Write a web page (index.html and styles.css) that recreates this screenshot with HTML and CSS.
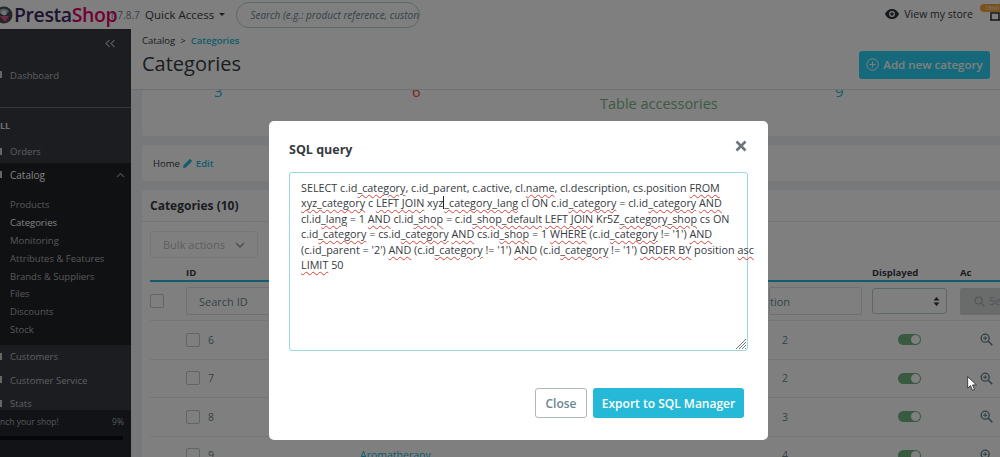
FILE: index.html
```html
<!DOCTYPE html>
<html lang="en">
<head>
<meta charset="utf-8">
<title>Categories</title>
<link rel="stylesheet" href="styles.css">
</head>
<body>
<div class="app">
  <header class="topbar">
    <div class="logo">
      <svg class="puffin" width="14" height="22" viewBox="0 0 14 22"><circle cx="4" cy="11" r="8.5" fill="#4a4a52"/><path d="M-2 9a6 5 0 0 1 11-2l-3 4z" fill="#9fb8c0"/><circle cx="4" cy="9" r="2.4" fill="#e8e8e8"/><path d="M0 12l9 0-4 6z" fill="#d65a80"/></svg>
      <span class="logo-a">Presta</span><span class="logo-b">Shop</span>
    </div>
    <span class="version">1.7.8.7</span>
    <span class="quick">Quick Access<i class="caret"></i></span>
    <div class="search">
      <svg width="13" height="13" viewBox="0 0 13 13"><circle cx="5.2" cy="5.2" r="3.9" fill="none" stroke="#222" stroke-width="1.7"/><path d="M8 8l4 4" stroke="#222" stroke-width="2"/></svg>
      <span class="search-text">Search (e.g.: product reference, custon</span>
    </div>
    <div class="store">
      <svg width="14" height="10" viewBox="0 0 14 10"><path d="M7 0C3.8 0 1.200 2 0 5c1.200 3 3.800 5 7 5s5.800-2 7-5c-1.200-3-3.800-5-7-5z" fill="#2a3238"/><circle cx="7" cy="5" r="2.900" fill="#fff"/><circle cx="7" cy="5" r="1.700" fill="#2a3238"/></svg>
      <span>View my store</span>
    </div>
    <span class="badge">1860</span>
    <svg class="bell" width="10" height="9" viewBox="0 0 10 9"><path d="M1 8V1h8v7M0 8h10" fill="none" stroke="#333" stroke-width="1.500"/></svg>
  </header>
  <div class="columns">
    <nav class="sidebar">
      <div class="collapse">
        <svg width="12" height="9" viewBox="0 0 12 9"><path d="M5.500 1L2 4.500 5.500 8M10.500 1L7 4.500 10.500 8" fill="none" stroke="#a8abaf" stroke-width="1.200"/></svg>
      </div>
      <div class="nav-item nav-dash"><i class="stub"></i>Dashboard</div>
      <div class="nav-section">LL</div>
      <div class="nav-item nav-orders"><i class="stub"></i>Orders</div>
      <div class="nav-open">
        <div class="nav-open-title"><i class="stub"></i><span>Catalog</span>
          <svg width="9" height="6" viewBox="0 0 9 6"><path d="M1 5l3.500-3.500L8 5" fill="none" stroke="#8d9094" stroke-width="1.200"/></svg>
        </div>
        <a class="sub">Products</a>
        <a class="sub sub-on">Categories</a>
        <a class="sub">Monitoring</a>
        <a class="sub">Attributes &amp; Features</a>
        <a class="sub">Brands &amp; Suppliers</a>
        <a class="sub">Files</a>
        <a class="sub">Discounts</a>
        <a class="sub">Stock</a>
      </div>
      <div class="nav-item"><i class="stub"></i>Customers</div>
      <div class="nav-item"><i class="stub"></i>Customer Service</div>
      <div class="nav-item"><i class="stub"></i>Stats</div>
      <div class="launch">
        <div class="launch-row"><span class="launch-text">nch your shop!</span><span>9%</span></div>
        <div class="launch-bar"></div>
      </div>
    </nav>
    <main class="main">
      <div class="page-head">
        <div class="crumbs"><span>Catalog</span><span class="sep">&gt;</span><b>Categories</b></div>
        <div class="title-row">
          <h1>Categories</h1>
          <a class="add-btn">
            <svg width="13" height="13" viewBox="0 0 13 13"><circle cx="6.500" cy="6.500" r="5.700" fill="none" stroke="#fff" stroke-width="1"/><path d="M6.500 3.500v6M3.500 6.500h6" stroke="#fff" stroke-width="1"/></svg>
            Add new category
          </a>
        </div>
      </div>
      <div class="content">
        <section class="card kpi">
          <span class="kpi-n blue k1">3</span>
          <span class="kpi-n red k2">6</span>
          <span class="kpi-big">Table accessories</span>
          <span class="kpi-n navy k3">9</span>
        </section>
        <section class="card crumbcard">
          <span>Home</span>
          <svg width="10" height="10" viewBox="0 0 10 10"><path d="M0 10l.6-2.800L7 .8 9.200 3 2.800 9.400z" fill="#25b9d7"/></svg>
          <a>Edit</a>
        </section>
        <section class="card list">
          <h2>Categories (10)</h2>
          <div class="bulk-row"><div class="bulk">Bulk actions
            <svg width="10" height="6" viewBox="0 0 10 6"><path d="M1 1l4 4 4-4" fill="none" stroke="#9a9ea2" stroke-width="1.500"/></svg></div></div>
          <div class="grid ghead"><span></span><span>ID</span><span></span><span></span><span>Displayed</span><span class="act">Ac</span></div>
          <div class="grid gfilter">
            <i class="check"></i>
            <div class="inp">Search ID</div>
            <span></span>
            <div class="inp inp-pos">tion</div>
            <div class="sel"><svg width="7" height="9" viewBox="0 0 7 9"><path d="M3.500 0L6.500 3.500h-6zM3.500 9L.5 5.500h6z" fill="#333"/></svg></div>
            <div class="sbtn"><svg width="11" height="11" viewBox="0 0 11 11"><circle cx="4.500" cy="4.500" r="3.500" fill="none" stroke="#aaa" stroke-width="1.200"/><path d="M7 7l3.500 3.500" stroke="#aaa" stroke-width="1.200"/></svg><span>Se</span></div>
          </div>
          <div class="grid row"><span></span><div class="idc"><i class="check"></i>6</div><span></span><span class="pos">2</span><div class="tg"></div><svg class="zoomi" width="13" height="13" viewBox="0 0 13 13"><circle cx="5.200" cy="5.200" r="4" fill="none" stroke="#5c7f8a" stroke-width="1.300"/><path d="M8 8l4.300 4.300" stroke="#5c7f8a" stroke-width="1.500"/><path d="M5.200 3.200v4M3.200 5.200h4" stroke="#5c7f8a"/></svg></div>
          <div class="grid row"><span></span><div class="idc"><i class="check"></i>7</div><span></span><span class="pos">2</span><div class="tg"></div><svg class="zoomi" width="13" height="13" viewBox="0 0 13 13"><circle cx="5.200" cy="5.200" r="4" fill="none" stroke="#5c7f8a" stroke-width="1.300"/><path d="M8 8l4.300 4.300" stroke="#5c7f8a" stroke-width="1.500"/><path d="M5.200 3.200v4M3.200 5.200h4" stroke="#5c7f8a"/></svg></div>
          <div class="grid row"><span></span><div class="idc"><i class="check"></i>8</div><span></span><span class="pos">3</span><div class="tg"></div><svg class="zoomi" width="13" height="13" viewBox="0 0 13 13"><circle cx="5.200" cy="5.200" r="4" fill="none" stroke="#5c7f8a" stroke-width="1.300"/><path d="M8 8l4.300 4.300" stroke="#5c7f8a" stroke-width="1.500"/><path d="M5.200 3.200v4M3.200 5.200h4" stroke="#5c7f8a"/></svg></div>
          <div class="grid row"><span></span><div class="idc"><i class="check"></i>9</div><a class="name">Aromatherapy</a><span class="pos">4</span><div class="tg"></div><svg class="zoomi" width="13" height="13" viewBox="0 0 13 13"><circle cx="5.200" cy="5.200" r="4" fill="none" stroke="#5c7f8a" stroke-width="1.300"/><path d="M8 8l4.300 4.300" stroke="#5c7f8a" stroke-width="1.500"/><path d="M5.200 3.200v4M3.200 5.200h4" stroke="#5c7f8a"/></svg></div>
        </section>
      </div>
    </main>
  </div>
</div>
<div class="overlay"></div>
<div class="modal">
  <div class="modal-head">
    <h3>SQL query</h3>
    <svg width="12" height="12" viewBox="0 0 12 12"><path d="M1.500 1.500l9 9M10.500 1.500l-9 9" stroke="#6c757d" stroke-width="2.600"/></svg>
  </div>
  <div class="sql">SELECT c.id<u>_category</u>, c.id_parent, c.active, cl.<u>name</u>, cl.description, cs.position <u>FROM</u><br><u>xyz_category</u> c <u>LEFT JOIN</u> xyz<i class="caretbar"></i><u>_category_lang</u> cl ON c.id<u>_category</u> = cl.id<u>_category</u> <u>AND</u><br>cl.id<u>_lang</u> = 1 <u>AND</u> cl.id<u>_shop</u> = c.id<u>_shop_default</u> <u>LEFT JOIN</u> Kr5Z<u>_category_shop</u> cs ON<br>c.id<u>_category</u> = cs.id<u>_category</u> <u>AND</u> cs.id<u>_shop</u> = 1 <u>WHERE</u> (c.id<u>_category</u> != '1') <u>AND</u><br>(c.id_parent = '2') <u>AND</u> (c.id<u>_category</u> != '1') <u>AND</u> (c.id<u>_category</u> != '1') <u>ORDER BY</u> position <u>asc</u><br><u>LIMIT</u> 50
    <svg class="grip" width="12" height="12" viewBox="0 0 12 12"><path d="M11 1L1 11M11 4L4 11M11 7L7 11M11 10L10 11" stroke="#777" stroke-width="1"/></svg>
  </div>
  <div class="modal-foot">
    <a class="btn-close">Close</a>
    <a class="btn-export">Export to SQL Manager</a>
  </div>
</div>
<svg class="pointer" width="10" height="15" viewBox="0 0 10 15"><path d="M.7.7v11.500l2.800-2.600 2 4.700 2-.9-2-4.500h3.900z" fill="#fff" stroke="#222" stroke-width=".8"/></svg>
</body>
</html>
```
FILE: styles.css
```css
* { box-sizing: border-box; }
html, body { margin: 0; height: 457px; overflow: hidden; }
body { font-family: "Open Sans", "Liberation Sans", sans-serif; background: #eff1f2; color: #363a41; position: relative; width: 1000px; }
a { text-decoration: none; }
i { font-style: normal; }
h1, h2, h3 { margin: 0; font-weight: 400; }

.app { width: 1000px; height: 457px; display: flex; flex-direction: column; overflow: hidden; }
.topbar { height: 29px; flex: none; background: #fff; display: flex; align-items: center; position: relative; }
.logo { display: flex; align-items: center; width: 109px; font-family: "Open Sans", sans-serif; font-size: 19.5px; font-weight: 600; letter-spacing: -.4px; }
.puffin { margin-right: 0; flex: none; }
.logo-a { color: #3a2a5e; }
.logo-b { color: #df0067; }
.version { font-size: 10px; color: #6c868e; width: 36px; }
.quick { font-size: 11.500px; color: #363a41; width: 91px; display: flex; align-items: center; }
.caret { width: 0; height: 0; border: 3.500px solid transparent; border-top-color: #363a41; border-bottom: 0; margin-left: 5px; }
.search { width: 184px; height: 26px; border: 1px solid #bbcdd2; border-radius: 13px; display: flex; align-items: center; padding-left: 7px; gap: 6px; overflow: hidden; }
.search-text { font-size: 10px; font-style: italic; color: #6c868e; white-space: nowrap; }
.store { margin-left: auto; display: flex; align-items: center; gap: 5px; font-size: 10.500px; color: #363a41; margin-right: 27px; position: relative; top: -1px; }
.badge { position: absolute; left: 980px; top: 4px; width: 24px; height: 8px; border-radius: 4px; background: #f7a33b; color: #fff; font-size: 6px; line-height: 8px; text-align: center; overflow: hidden; }
.bell { position: absolute; left: 990px; top: 12px; }

.columns { flex: 1; display: flex; min-height: 0; }
.sidebar { width: 131px; flex: none; background: #363a41; color: #bebfc0; font-size: 9.500px; display: flex; flex-direction: column; position: relative; overflow: hidden; }
.collapse { height: 29px; display: flex; justify-content: flex-end; align-items: center; padding-right: 15px; }
.nav-item { height: 23.500px; display: flex; align-items: center; padding-left: 10px; position: relative; }
.stub { position: absolute; left: 0; top: 50%; width: 2px; height: 7px; margin-top: -4px; background: #ccc; }
.nav-dash { height: 24px; margin-bottom: 20px; margin-top: 5px; }
.nav-dash::after { content: none; }
.nav-section { border-top: 1px solid #6a6e74; height: 33px; padding-top: 11px; font-size: 9px; font-weight: 700; color: #ddd; }
.nav-orders { height: 23px; }
.nav-open { background: #202226; height: 182px; display: flex; flex-direction: column; }
.nav-open-title { height: 23px; position: relative; display: flex; align-items: center; justify-content: space-between; padding: 0 6px 0 10px; color: #fff; font-size: 10px; margin-bottom: 10px; }
.sub { height: 17.800px; display: flex; align-items: center; padding-left: 10px; color: #aeafb1; font-size: 9.500px; }
.sub-on { color: #fff; }
.nav-open + .nav-item { margin-top: 0; }
.launch { position: absolute; left: 0; right: 0; bottom: 0; top: 381px; background: #25272c; padding: 6px 7px 0 0; }
.launch-row { display: flex; justify-content: space-between; font-size: 8.500px; color: #a9aaac; }
.launch-bar { height: 4px; background: #0d0e10; margin-top: 9px; margin-right: 1px; }

.main { flex: 1; min-width: 0; display: flex; flex-direction: column; background: #eff1f2; overflow: hidden; }
.page-head { height: 61px; flex: none; background: #fff; border-bottom: 1px solid #dfe3e5; padding: 5px 10px 0 11px; }
.crumbs { font-size: 9.500px; display: flex; gap: 5px; height: 13px; align-items: center; }
.crumbs b { color: #25b9d7; font-weight: 600; }
.title-row { display: flex; justify-content: space-between; align-items: center; margin-top: 2px; height: 30px; }
h1 { font-size: 20px; color: #363a41; line-height: 30px; }
.add-btn { background: #2ad3f4; height: 28px; width: 131px; border-radius: 3px; display: flex; align-items: center; gap: 4px; justify-content: center; color: #fff; font-size: 11.500px; font-weight: 600; margin-top: 1px; }
.content { padding: 0 0 0 11px; display: flex; flex-direction: column; gap: 9px; }
.card { background: #fff; border-radius: 3px 0 0 3px; }
.kpi { height: 46px; position: relative; overflow: hidden; }
.kpi-n { position: absolute; font-size: 15px; line-height: 20px; top: -9px; }
.k1 { left: 72px; } .k2 { left: 270px; } .k3 { left: 693px; }
.blue { color: #25b9d7; } .red { color: #f54c3e; } .navy { color: #25b9d7; }
.kpi-big { position: absolute; left: 458px; top: 4px; font-size: 14.500px; color: #7bb58a; line-height: 20px; }
.crumbcard { height: 36px; display: flex; align-items: center; gap: 3px; padding-left: 11px; font-size: 9.500px; }
.crumbcard a { color: #25b9d7; font-weight: 600; }
.list { padding: 0; }
.list h2 { font-size: 12px; font-weight: 700; height: 32px; line-height: 32px; padding-left: 8px; border-bottom: 1px solid #e8eaeb; }
.bulk-row { padding: 9px 0 0 8px; height: 43px; }
.bulk { width: 108px; height: 27px; border: 1px solid #eceeef; border-radius: 3px; display: flex; align-items: center; justify-content: space-between; padding: 0 12px; font-size: 11px; color: #bbbdbf; }
.grid { display: grid; grid-template-columns: 36px 174px 409px 103px 88px 49px; margin-left: 8px; align-items: center; }
.ghead { height: 17px; font-size: 9.500px; font-weight: 700; border-bottom: 2px solid #25b9d7; box-sizing: content-box; }
.ghead { height: 15px; padding-top: 0; }
.gfilter { height: 39px; border-bottom: 1px solid #e8eaeb; align-items: center; }
.check { display: inline-block; width: 14px; height: 14px; border: 1px solid #bbcdd2; border-radius: 2px; background: #fff; flex: none; }
.inp { height: 28px; border: 1px solid #dde2e4; border-radius: 2px; font-size: 11px; color: #6c868e; display: flex; align-items: center; padding-left: 12px; width: 84px; }
.inp-pos { width: 93px; padding-left: 0; justify-content: flex-start; white-space: nowrap; }
.sel { width: 75px; height: 26px; border: 1px solid #bbcdd2; border-radius: 3px; display: flex; align-items: center; justify-content: flex-end; padding-right: 6px; }
.sbtn { height: 27px; background: #d4d6d7; border-radius: 2px; display: flex; align-items: center; gap: 4px; padding-left: 14px; font-size: 10.500px; color: #a8aaac; }
.row { height: 38.500px; border-bottom: 1px solid #e8eaeb; font-size: 10.500px; color: #6c868e; }
.idc { display: flex; align-items: center; gap: 8px; }
.name { color: #25b9d7; font-size: 10.500px; }
.pos { padding-left: 13px; }
.tg { width: 23px; height: 11px; border-radius: 6px; background: #70b580; margin-left: 26px; position: relative; }
.tg::after { content: ""; position: absolute; right: 1px; top: 1px; width: 9px; height: 9px; border-radius: 50%; background: #fff; }
.zoomi { margin-left: 20px; }

.overlay { position: absolute; inset: 0; background: rgba(0,0,0,.5); }
.modal { position: absolute; left: 269px; top: 121px; width: 499px; height: 319px; background: #fff; border-radius: 5px; padding: 0 20px; display: flex; flex-direction: column; }
.modal-head { height: 51px; flex: none; display: flex; align-items: center; justify-content: space-between; padding-right: 1px; }
.modal-head svg { margin-top: -1px; margin-right: 0; }
.modal-head h3 { font-size: 12.500px; font-weight: 700; color: #363a41; padding-top: 5px; }
.sql { width: 459px; height: 179px; border: 1px solid #9cd6e3; border-radius: 3px; padding: 7px 11px; font-size: 10.800px; line-height: 15.400px; color: #363a41; white-space: nowrap; position: relative; }
.sql u { text-decoration: underline wavy #d2453a 1px; text-underline-offset: 2px; }
.caretbar { display: inline-block; width: 1px; height: 13px; background: #222; vertical-align: -2px; }
.grip { position: absolute; right: 0; bottom: 0; }
.modal-foot { display: flex; justify-content: flex-end; gap: 6px; margin-top: 37px; padding-right: 4px; }
.btn-close, .btn-export { height: 30px; display: flex; align-items: center; justify-content: center; border-radius: 3px; font-size: 12px; font-weight: 600; }
.btn-close { width: 52px; border: 1px solid #aeb7ba; color: #6c868e; }
.btn-export { width: 151px; background: #25b9d7; color: #fff; }
.pointer { position: absolute; left: 967px; top: 376px; }
```
